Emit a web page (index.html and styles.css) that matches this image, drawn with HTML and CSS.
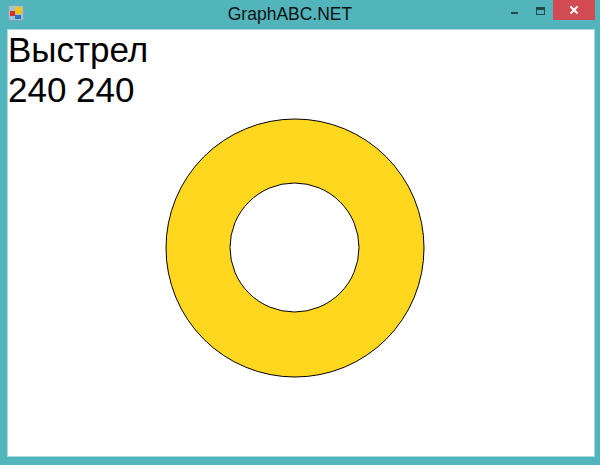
FILE: index.html
```html
<!DOCTYPE html>
<html>
<head>
<meta charset="utf-8">
<link rel="stylesheet" href="styles.css">
</head>
<body>
<div class="window">
  <div class="titlebar">
    <div class="tb-left">
      <svg class="app-icon" width="16" height="16" viewBox="0 0 16 16">
        <rect x="0.5" y="0.5" width="15" height="15" rx="2" fill="#9fc6cf" stroke="#7aa9b3"/>
        <rect x="7" y="2" width="7" height="7" fill="#f3c21c"/>
        <rect x="2" y="6" width="5" height="5" fill="#d8312d"/>
        <rect x="7" y="10" width="6" height="4" fill="#2f71c9"/>
      </svg>
    </div>
    <div class="title">GraphABC.NET</div>
    <div class="tb-right">
      <div class="btn min"><span class="min-bar"></span></div>
      <div class="btn max"><span class="max-box"></span></div>
      <div class="btn close">
        <svg width="10" height="10" viewBox="0 0 10 10"><path d="M1.5 1.5 L8.5 8.5 M8.5 1.5 L1.5 8.5" stroke="#fff" stroke-width="2"/></svg>
      </div>
    </div>
  </div>
  <div class="client">
    <svg class="canvas" width="586" height="426" viewBox="0 0 586 426">
      <circle cx="287" cy="218" r="129" fill="#fed71e" stroke="#000" stroke-width="1"/>
      <circle cx="286.5" cy="217.5" r="64.5" fill="#fff" stroke="#000" stroke-width="1"/>
    </svg>
    <div class="text">
      <div class="line">Выстрел</div>
      <div class="line">240 240</div>
    </div>
  </div>
</div>
</body>
</html>
```

FILE: styles.css
```css
html, body {
  margin: 0;
  padding: 0;
}
body {
  width: 600px;
  height: 465px;
  overflow: hidden;
}
.window {
  width: 600px;
  height: 465px;
  box-sizing: border-box;
  background: #52b5bc;
  padding: 0 5px 8px 7px;
  display: flex;
  flex-direction: column;
}
.titlebar {
  height: 29px;
  display: grid;
  grid-template-columns: 1fr auto 1fr;
  align-items: start;
}
.tb-left {
  padding: 5px 0 0 1px;
}
.app-icon {
  display: block;
}
.title {
  font-family: "Liberation Sans", Arial, sans-serif;
  font-size: 17.5px;
  color: #111;
  line-height: 20px;
  padding-top: 4px;
  margin-right: 22px;
}
.tb-right {
  display: flex;
  justify-content: flex-end;
  align-items: flex-start;
}
.btn {
  height: 20px;
  display: flex;
  align-items: center;
  justify-content: center;
}
.btn.min {
  width: 25px;
}
.btn.max {
  width: 26px;
}
.btn.close {
  width: 42px;
  background: #d34b52;
}
.min-bar {
  width: 7px;
  height: 2px;
  background: #24474a;
  margin-top: 6px;
}
.max-box {
  width: 7px;
  height: 4px;
  border: 1px solid #24474a;
  border-top-width: 3px;
  margin-top: 1px;
}
.client {
  flex: 1;
  position: relative;
  background: #fff;
  border: 1px solid #a9dadd;
}
.canvas {
  position: absolute;
  left: 0;
  top: 0;
}
.text {
  position: relative;
  font-family: "Liberation Sans", Arial, sans-serif;
  font-size: 35px;
  color: #000;
  line-height: 40px;
}
```
